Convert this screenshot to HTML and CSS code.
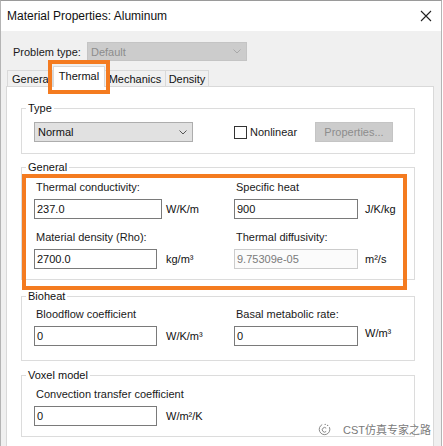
FILE: index.html
```html
<!DOCTYPE html>
<html>
<head>
<meta charset="utf-8">
<link rel="stylesheet" href="styles.css">
</head>
<body>
<div class="window">
  <div class="titlebar">
    <span class="title">Material Properties: Aluminum</span>
    <svg class="close" width="12" height="12" viewBox="0 0 12 12"><path d="M1 1L11 11M11 1L1 11" stroke="#222" stroke-width="1.1" fill="none"/></svg>
  </div>
  <div class="content">
    <div class="problem-row">
      <span class="problem-label">Problem type:</span>
      <div class="combo combo-disabled">
        <span>Default</span>
        <svg class="chev" width="8" height="5" viewBox="0 0 8 5"><path d="M0.5 0.5L4 4L7.5 0.5" stroke="#a8a8a8" fill="none"/></svg>
      </div>
    </div>
    <div class="tabs">
      <div class="tab tab-general">General</div>
      <div class="tab tab-thermal active">Thermal</div>
      <div class="tab tab-mech">Mechanics</div>
      <div class="tab tab-density">Density</div>
    </div>
    <div class="panel">
      <fieldset class="group group-type">
        <legend>Type</legend>
        <div class="type-row">
          <div class="combo combo-normal">
            <span>Normal</span>
            <svg class="chev" width="8" height="5" viewBox="0 0 8 5"><path d="M0.5 0.5L4 4L7.5 0.5" stroke="#555" fill="none"/></svg>
          </div>
          <div class="check-wrap"><span class="checkbox"></span><span>Nonlinear</span></div>
          <div class="button-disabled">Properties...</div>
        </div>
      </fieldset>

      <fieldset class="group group-general">
        <legend>General</legend>
        <div class="grid">
          <div class="cell">
            <div class="lbl">Thermal conductivity:</div>
            <div class="field-row left"><div class="input w128">237.0</div><span class="unit">W/K/m</span></div>
          </div>
          <div class="cell">
            <div class="lbl">Specific heat</div>
            <div class="field-row right"><div class="input w124">900</div><span class="unit">J/K/kg</span></div>
          </div>
          <div class="cell">
            <div class="lbl">Material density (Rho):</div>
            <div class="field-row left"><div class="input w123">2700.0</div><span class="unit">kg/m³</span></div>
          </div>
          <div class="cell">
            <div class="lbl">Thermal diffusivity:</div>
            <div class="field-row right"><div class="input w124 input-disabled">9.75309e-05</div><span class="unit">m²/s</span></div>
          </div>
        </div>
      </fieldset>

      <fieldset class="group group-bio">
        <legend>Bioheat</legend>
        <div class="grid">
          <div class="cell">
            <div class="lbl">Bloodflow coefficient</div>
            <div class="field-row left"><div class="input w123">0</div><span class="unit">W/K/m³</span></div>
          </div>
          <div class="cell">
            <div class="lbl">Basal metabolic rate:</div>
            <div class="field-row right"><div class="input w124">0</div><span class="unit unit-up">W/m³</span></div>
          </div>
        </div>
      </fieldset>

      <fieldset class="group group-voxel">
        <legend>Voxel model</legend>
        <div class="grid">
          <div class="cell">
            <div class="lbl">Convection transfer coefficient</div>
            <div class="field-row left"><div class="input w123">0</div><span class="unit">W/m²/K</span></div>
          </div>
        </div>
      </fieldset>
    </div>
  </div>

  <div class="hl hl-tab"></div>
  <div class="hl hl-general"></div>

  <div class="watermark">
    <svg width="13" height="13" viewBox="0 0 13 13"><path d="M4.2 1.6A5.3 5.3 0 1 0 11.4 4.2" stroke="#8a8a8a" stroke-width="1" fill="none"/><path d="M8.2 5.2A2.3 2.3 0 1 0 8.2 8.4" stroke="#8a8a8a" stroke-width="1" fill="none"/><circle cx="7.2" cy="1.4" r="0.7" fill="#8a8a8a"/><circle cx="9.6" cy="2.4" r="0.7" fill="#8a8a8a"/></svg>
    <span>CST仿真专家之路</span>
  </div>
</div>
</body>
</html>
```

FILE: styles.css
```css
* { box-sizing: border-box; }
html, body { margin: 0; padding: 0; }
body {
  width: 443px;
  height: 446px;
  overflow: hidden;
  background: #ffffff;
  font-family: "Liberation Sans", Arial, "Noto Sans CJK SC", sans-serif;
  font-size: 11px;
  color: #1a1a1a;
}
.window {
  position: relative;
  width: 442px;
  height: 446px;
  border-left: 1px solid #b4b4b4;
  border-right: 1px solid #b4b4b4;
  border-top: 1px solid #9a9a9a;
  background: #f0f0f0;
  display: flex;
  flex-direction: column;
}
.titlebar {
  height: 30px;
  background: #ffffff;
  display: flex;
  align-items: center;
  justify-content: space-between;
  padding: 0 9px 0 6px;
  flex: none;
}
.title {
  font-size: 12px;
  color: #111;
}
.close { display: block; }

.content {
  flex: 1;
  display: flex;
  flex-direction: column;
  background: #f0f0f0;
}
.problem-row {
  margin-top: 11px;
  height: 19px;
  display: flex;
  align-items: center;
  padding-left: 12px;
}
.problem-label {
  width: 74px;
}
.combo {
  display: flex;
  align-items: center;
  justify-content: space-between;
  padding: 0 5px 0 3px;
}
.combo-disabled {
  width: 160px;
  height: 19px;
  background: #cccccc;
  border: 1px solid #c4c4c4;
  color: #8d8d8d;
}
.combo-normal {
  width: 159px;
  height: 20px;
  background: #e1e1e1;
  border: 1px solid #adadad;
  color: #111;
}
.chev { display: block; }

.tabs {
  margin-top: 5px;
  display: flex;
  align-items: flex-end;
  padding-left: 6px;
  height: 20px;
  position: relative;
  z-index: 2;
}
.tab {
  height: 16px;
  border: 1px solid #d9d9d9;
  border-bottom: none;
  background: #f0f0f0;
  display: flex;
  align-items: center;
  justify-content: center;
  color: #111;
  white-space: nowrap;
  overflow: hidden;
}
.tab-general { width: 46px; justify-content: flex-start; padding-left: 4px; }
.tab-thermal { width: 52px; }
.tab-mech { width: 61px; border-left: none; }
.tab-density { width: 43px; border-left: none; }
.tab.active {
  height: 21px;
  margin-bottom: -1px;
  background: #ffffff;
  padding-bottom: 3px;
}

.panel {
  margin-left: 5px;
  width: 428px;
  flex: 1;
  background: #ffffff;
  border: 1px solid #d9d9d9;
  border-bottom: none;
  padding: 14px 0 0 14px;
}
.group {
  margin: 0;
  width: 394px;
  border: 1px solid #dcdcdc;
  padding: 0 0 0 12px;
  min-width: 0;
}
.group legend {
  padding: 0 2px;
  margin-left: -8px;
  line-height: 14px;
  color: #111;
}
.group-type { padding-top: 7px; padding-bottom: 11px; }
.group-general { margin-top: 6px; padding-top: 6px; padding-bottom: 10px; }
.group-bio { margin-top: 9px; padding-top: 4px; padding-bottom: 14px; }
.group-voxel { margin-top: 7px; padding-top: 5px; padding-bottom: 10px; }

.type-row {
  display: grid;
  grid-template-columns: 200px 81px 78px;
  align-items: center;
  height: 20px;
}
.check-wrap {
  display: flex;
  align-items: center;
  gap: 3px;
}
.checkbox {
  width: 13px;
  height: 13px;
  border: 1px solid #333;
  background: #fff;
}
.button-disabled {
  width: 78px;
  height: 20px;
  background: #cccccc;
  border: 1px solid #c4c4c4;
  color: #8d8d8d;
  display: flex;
  align-items: center;
  justify-content: center;
}

.grid {
  display: grid;
  grid-template-columns: 200px 160px;
  row-gap: 11px;
}
.lbl {
  height: 14px;
  line-height: 14px;
  padding-left: 2px;
  white-space: nowrap;
}
.field-row {
  margin-top: 5px;
  display: grid;
  align-items: center;
  height: 20px;
}
.field-row.left { grid-template-columns: 132px auto; }
.field-row.right { grid-template-columns: 131px auto; }
.input {
  height: 20px;
  border: 1px solid #7a7a7a;
  background: #ffffff;
  padding-left: 2px;
  display: flex;
  align-items: center;
  color: #111;
}
.w128 { width: 128px; }
.w124 { width: 124px; }
.w123 { width: 123px; }
.input-disabled {
  border-color: #cccccc;
  background: #fbfbfb;
  color: #7a7a7a;
}
.unit { color: #111; white-space: nowrap; }
.unit-up { align-self: start; margin-top: 1px; }

.hl {
  position: absolute;
  border: 4px solid #f47b20;
  z-index: 5;
}
.hl-tab { left: 47px; top: 59px; width: 62px; height: 34px; }
.hl-general { left: 21px; top: 173px; width: 385px; height: 116px; }

.watermark {
  position: absolute;
  left: 317px;
  top: 420px;
  display: flex;
  align-items: center;
  gap: 12px;
  color: #7a7a7a;
  font-size: 11px;
  z-index: 6;
}
.watermark svg { display: block; }
```
